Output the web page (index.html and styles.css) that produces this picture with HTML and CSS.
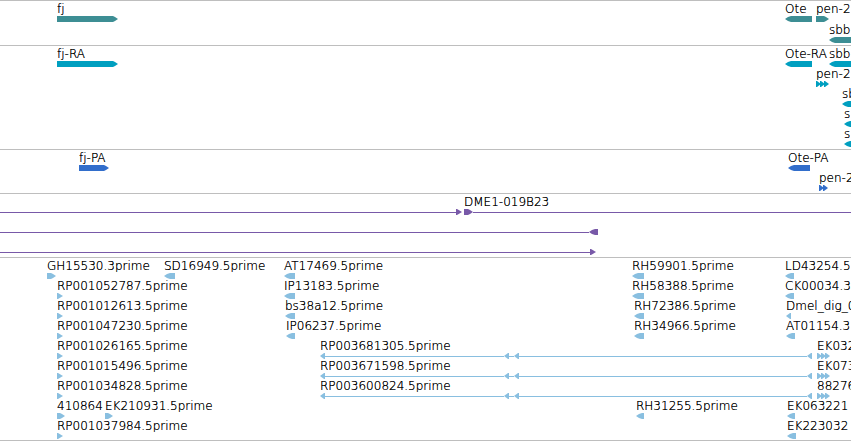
FILE: index.html
```html
<!DOCTYPE html>
<html lang="en">
<head>
<meta charset="utf-8">
<title>Genome tracks</title>
<link rel="stylesheet" href="styles.css">
</head>
<body>
<main class="browser">
  <section class="track gene">
    <div class="row">
      <div class="feature" style="--x:57px;--w:61px"><span class="label">fj</span><div class="glyph"><i class="fwd"></i></div></div>
      <div class="feature" style="--x:785px;--w:27px"><span class="label">Ote</span><div class="glyph"><i class="rev"></i></div></div>
      <div class="feature" style="--x:816px;--w:13px"><span class="label">pen-2</span><div class="glyph"><i class="fwd"></i></div></div>
    </div>
    <div class="row">
      <div class="feature" style="--x:829px;--w:40px"><span class="label">sbb</span><div class="glyph"><i class="rev"></i></div></div>
    </div>
  </section>

  <section class="track transcript">
    <div class="row">
      <div class="feature" style="--x:57px;--w:61px"><span class="label">fj-RA</span><div class="glyph"><i class="fwd"></i></div></div>
      <div class="feature" style="--x:785px;--w:27px"><span class="label">Ote-RA</span><div class="glyph"><i class="rev"></i></div></div>
      <div class="feature" style="--x:829px;--w:40px"><span class="label">sbb</span><div class="glyph"><i class="rev"></i></div></div>
    </div>
    <div class="row">
      <div class="feature" style="--x:816px"><span class="label">pen-2</span><div class="glyph"><i class="tip-fwd"></i><i class="tip-fwd"></i><i class="tip-fwd"></i></div></div>
    </div>
    <div class="row">
      <div class="feature" style="--x:842px;--w:40px"><span class="label">sb</span><div class="glyph"><i class="rev"></i></div></div>
    </div>
    <div class="row">
      <div class="feature" style="--x:844px;--w:40px"><span class="label">s</span><div class="glyph"><i class="rev"></i></div></div>
    </div>
    <div class="row">
      <div class="feature" style="--x:844px;--w:40px"><span class="label">s</span><div class="glyph"><i class="rev"></i></div></div>
    </div>
  </section>

  <section class="track protein">
    <div class="row">
      <div class="feature" style="--x:79px;--w:30px"><span class="label">fj-PA</span><div class="glyph"><i class="fwd"></i></div></div>
      <div class="feature" style="--x:788px;--w:22px"><span class="label">Ote-PA</span><div class="glyph"><i class="rev"></i></div></div>
    </div>
    <div class="row">
      <div class="feature" style="--x:819px"><span class="label">pen-2</span><div class="glyph"><i class="tip-fwd"></i><i class="tip-fwd"></i></div></div>
    </div>
  </section>

  <section class="track clone">
    <div class="row">
      <div class="feature" style="--x:0px"><span class="label"></span><div class="glyph"><i class="link" style="--w:456px"></i><i class="tip-fwd wide"></i></div></div>
      <div class="feature to-edge" style="--x:464px"><span class="label">DME1-019B23</span><div class="glyph"><i class="fwd" style="--w:9px"></i><i class="link rest"></i></div></div>
    </div>
    <div class="row">
      <div class="feature" style="--x:0px"><span class="label"></span><div class="glyph"><i class="link" style="--w:589px"></i><i class="rev" style="--w:9px"></i></div></div>
    </div>
    <div class="row">
      <div class="feature" style="--x:0px"><span class="label"></span><div class="glyph"><i class="link" style="--w:590px"></i><i class="tip-fwd wide"></i></div></div>
    </div>
  </section>

  <section class="track est">
    <div class="row">
      <div class="feature" style="--x:47px;--w:9px"><span class="label">GH15530.3prime</span><div class="glyph"><i class="fwd"></i></div></div>
      <div class="feature" style="--x:164px;--w:11px"><span class="label">SD16949.5prime</span><div class="glyph"><i class="rev"></i></div></div>
      <div class="feature" style="--x:284px;--w:11px"><span class="label">AT17469.5prime</span><div class="glyph"><i class="rev"></i></div></div>
      <div class="feature" style="--x:632px;--w:12px"><span class="label">RH59901.5prime</span><div class="glyph"><i class="rev"></i></div></div>
      <div class="feature" style="--x:785px;--w:9px"><span class="label">LD43254.5</span><div class="glyph"><i class="rev"></i></div></div>
    </div>
    <div class="row">
      <div class="feature" style="--x:57px"><span class="label">RP001052787.5prime</span><div class="glyph"><i class="tip-fwd wide"></i></div></div>
      <div class="feature" style="--x:284px;--w:11px"><span class="label">IP13183.5prime</span><div class="glyph"><i class="rev"></i></div></div>
      <div class="feature" style="--x:632px;--w:12px"><span class="label">RH58388.5prime</span><div class="glyph"><i class="rev"></i></div></div>
      <div class="feature" style="--x:785px;--w:9px"><span class="label">CK00034.3</span><div class="glyph"><i class="rev"></i></div></div>
    </div>
    <div class="row">
      <div class="feature" style="--x:57px"><span class="label">RP001012613.5prime</span><div class="glyph"><i class="tip-fwd wide"></i></div></div>
      <div class="feature" style="--x:285px;--w:10px"><span class="label">bs38a12.5prime</span><div class="glyph"><i class="rev"></i></div></div>
      <div class="feature" style="--x:634px;--w:10px"><span class="label">RH72386.5prime</span><div class="glyph"><i class="rev"></i></div></div>
      <div class="feature" style="--x:786px"><span class="label">Dmel_dig_0</span><div class="glyph"><i class="tip-rev"></i></div></div>
    </div>
    <div class="row">
      <div class="feature" style="--x:57px"><span class="label">RP001047230.5prime</span><div class="glyph"><i class="tip-fwd wide"></i></div></div>
      <div class="feature" style="--x:286px;--w:9px"><span class="label">IP06237.5prime</span><div class="glyph"><i class="rev"></i></div></div>
      <div class="feature" style="--x:634px;--w:10px"><span class="label">RH34966.5prime</span><div class="glyph"><i class="rev"></i></div></div>
      <div class="feature" style="--x:786px;--w:9px"><span class="label">AT01154.3</span><div class="glyph"><i class="rev"></i></div></div>
    </div>
    <div class="row">
      <div class="feature" style="--x:57px"><span class="label">RP001026165.5prime</span><div class="glyph"><i class="tip-fwd wide"></i></div></div>
      <div class="feature" style="--x:320px"><span class="label">RP003681305.5prime</span><div class="glyph"><i class="tip-rev"></i><i class="link" style="--w:179px"></i><i class="tip-rev"></i><i class="link" style="--w:5px"></i><i class="tip-rev"></i><i class="link" style="--w:288px"></i><i class="tip-rev"></i></div></div>
      <div class="feature" style="--x:817px"><span class="label">EK032</span><div class="glyph"><i class="tip-fwd"></i><i class="tip-fwd"></i><i class="tip-fwd"></i></div></div>
    </div>
    <div class="row">
      <div class="feature" style="--x:57px"><span class="label">RP001015496.5prime</span><div class="glyph"><i class="tip-fwd wide"></i></div></div>
      <div class="feature" style="--x:320px"><span class="label">RP003671598.5prime</span><div class="glyph"><i class="tip-rev"></i><i class="link" style="--w:179px"></i><i class="tip-rev"></i><i class="link" style="--w:5px"></i><i class="tip-rev"></i><i class="link" style="--w:288px"></i><i class="tip-rev"></i></div></div>
      <div class="feature" style="--x:817px"><span class="label">EK073</span><div class="glyph"><i class="tip-fwd"></i><i class="tip-fwd"></i><i class="tip-fwd"></i></div></div>
    </div>
    <div class="row">
      <div class="feature" style="--x:57px"><span class="label">RP001034828.5prime</span><div class="glyph"><i class="tip-fwd wide"></i></div></div>
      <div class="feature" style="--x:320px"><span class="label">RP003600824.5prime</span><div class="glyph"><i class="tip-rev"></i><i class="link" style="--w:179px"></i><i class="tip-rev"></i><i class="link" style="--w:5px"></i><i class="tip-rev"></i><i class="link" style="--w:288px"></i><i class="tip-rev"></i></div></div>
      <div class="feature" style="--x:817px"><span class="label">88276</span><div class="glyph"><i class="tip-fwd"></i><i class="tip-fwd"></i><i class="tip-fwd"></i></div></div>
    </div>
    <div class="row">
      <div class="feature" style="--x:57px;--w:8px"><span class="label">410864</span><div class="glyph"><i class="fwd"></i></div></div>
      <div class="feature" style="--x:105px;--w:8px"><span class="label">EK210931.5prime</span><div class="glyph"><i class="fwd"></i></div></div>
      <div class="feature" style="--x:636px;--w:8px"><span class="label">RH31255.5prime</span><div class="glyph"><i class="rev"></i></div></div>
      <div class="feature" style="--x:787px;--w:8px"><span class="label">EK063221</span><div class="glyph"><i class="rev"></i></div></div>
    </div>
    <div class="row">
      <div class="feature" style="--x:57px"><span class="label">RP001037984.5prime</span><div class="glyph"><i class="tip-fwd wide"></i></div></div>
      <div class="feature" style="--x:787px;--w:9px"><span class="label">EK223032</span><div class="glyph"><i class="rev"></i></div></div>
    </div>
  </section>
</main>
</body>
</html>
```
FILE: styles.css
```css
body {
  margin: 0;
  background: #fff;
  color: #000;
  font-family: "DejaVu Sans", sans-serif;
  font-size: 12px;
  font-weight: 200;
  line-height: 17px;
  text-shadow: 0 0 0 #000;
}

.browser {
  overflow: hidden;
  border-bottom: 1px solid #bebebe;
}

.track {
  border-top: 1px solid #bebebe;
  padding-bottom: 3px;
}

.gene { --color: #3d8e94; padding-bottom: 2px; }
.transcript { --color: #009fc0; }
.protein { --color: #326ecb; }
.clone { --color: #7859a8; }
.est { --color: #89bfe0; padding-bottom: 2px; }

/* All features of a row share one grid cell; --x is the start position. */
.row {
  display: grid;
  grid-template-columns: minmax(0, 1fr);
  height: 20px;
}

.gene .row { height: 21px; }

.feature {
  grid-area: 1 / 1;
  justify-self: start;
  margin-left: var(--x);
}

.to-edge { justify-self: stretch; }

.label {
  display: block;
  height: 15px;
  white-space: nowrap;
}

.glyph {
  display: flex;
  align-items: center;
  height: 6px;
}

.glyph i {
  flex: none;
  width: var(--w);
  height: 6px;
  background: var(--color);
}

.glyph .fwd {
  clip-path: polygon(0 0, calc(100% - 5px) 0, calc(100% - 3px) 1px, 100% 50%, calc(100% - 3px) 5px, calc(100% - 5px) 100%, 0 100%);
}

.glyph .rev {
  clip-path: polygon(100% 0, 6px 0, 3px 1px, 0 50%, 3px 5px, 6px 100%, 100% 100%);
}

.glyph .tip-fwd {
  width: 5px;
  clip-path: polygon(0 0, 1px 0, 100% 50%, 1px 100%, 0 100%);
}

.glyph .tip-fwd + .tip-fwd { margin-left: -1px; }

.glyph .wide { width: 6px; }

.glyph .tip-rev {
  width: 5px;
  clip-path: polygon(100% 0, 80% 0, 0 50%, 80% 100%, 100% 100%);
}

.glyph .link {
  height: 1px;
  margin-top: 1px;
}

.glyph .rest { flex: 1; }
```
